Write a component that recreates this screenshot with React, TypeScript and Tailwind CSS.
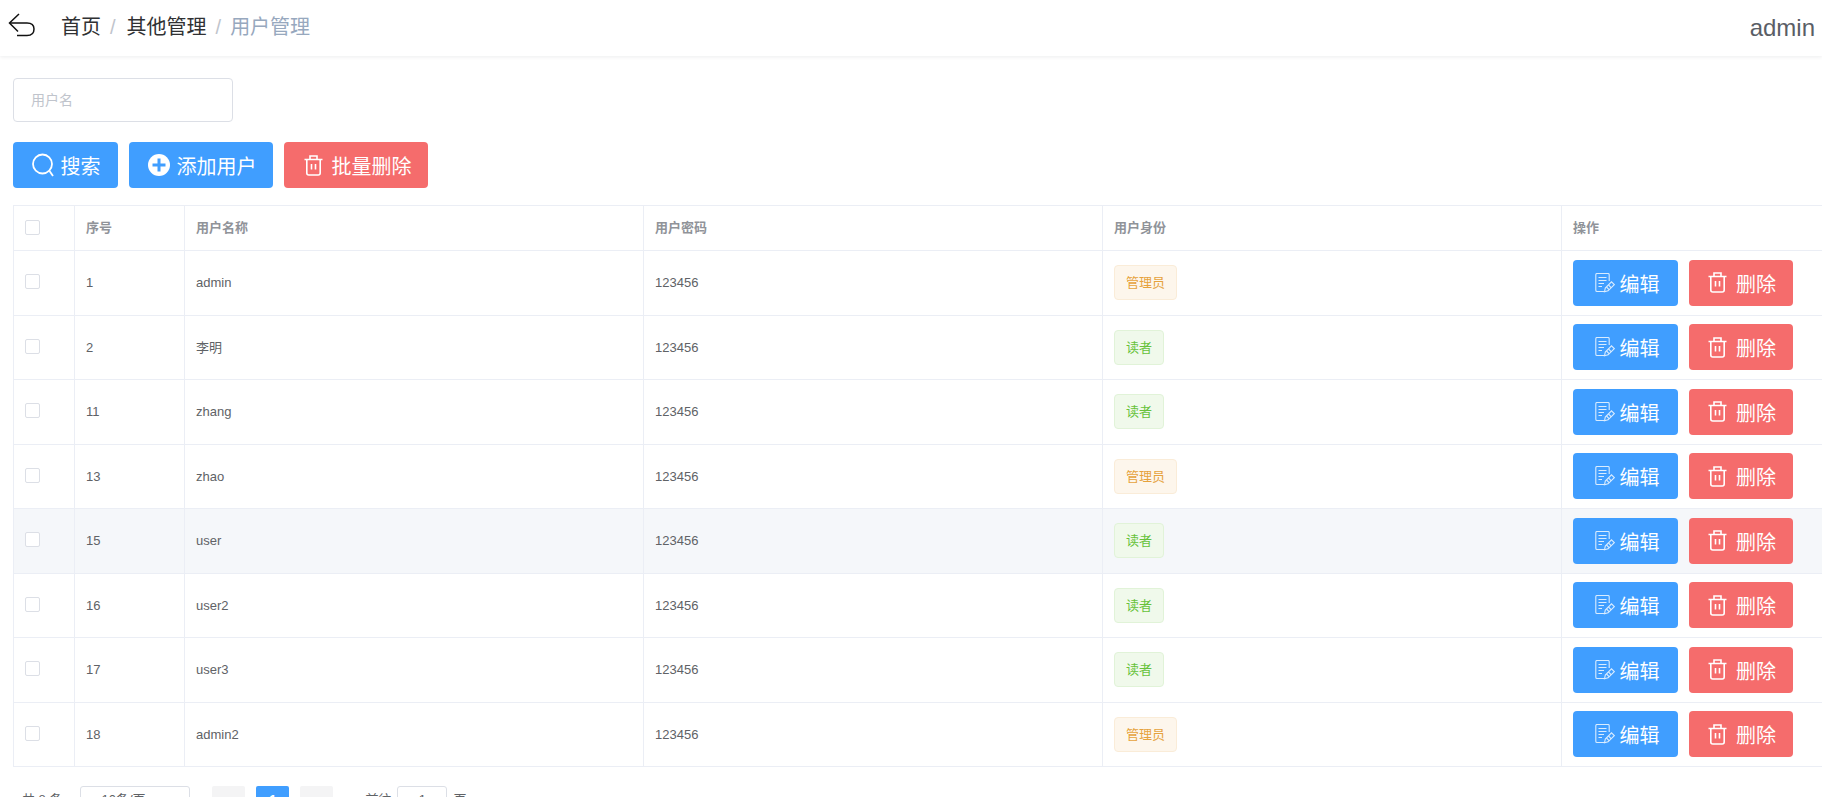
const FONT = "font-['Liberation_Sans','Noto_Sans_CJK_SC',sans-serif]";

const users = [
  { id: 1, name: 'admin', role: '管理员' },
  { id: 2, name: '李明', role: '读者' },
  { id: 11, name: 'zhang', role: '读者' },
  { id: 13, name: 'zhao', role: '管理员' },
  { id: 15, name: 'user', role: '读者' },
  { id: 16, name: 'user2', role: '读者' },
  { id: 17, name: 'user3', role: '读者' },
  { id: 18, name: 'admin2', role: '管理员' },
];

function BackIcon() {
  return (
    <svg width="28" height="24" viewBox="0 0 28 24" fill="none" stroke="#111" strokeWidth="1.5" className="shrink-0 -translate-y-[3px]">
      <path d="M11 1 L1.5 10 L10 18.5" />
      <path d="M2 10 H19 C23.5 10 26 12.5 26 16 C26 20 23.5 22.5 19 22.5 H9" />
    </svg>
  );
}

function SearchIcon() {
  return (
    <svg width="24" height="24" viewBox="0 0 24 24" fill="none" stroke="#fff" strokeWidth="1.8">
      <circle cx="11.5" cy="11" r="9.5" />
      <path d="M18.5 18 L22 23" />
    </svg>
  );
}

function PlusIcon() {
  return (
    <svg width="22" height="22" viewBox="0 0 22 22">
      <circle cx="11" cy="11" r="11" fill="#fff" />
      <path d="M11 4.5 V17.5 M4.5 11 H17.5" stroke="#409eff" strokeWidth="3" />
    </svg>
  );
}

function TrashIcon() {
  return (
    <svg width="19" height="21" viewBox="0 0 19 21" fill="none" stroke="#fff" strokeWidth="1.6">
      <path d="M0.5 4.5 H18.5 M6 4.5 V1 H13 V4.5" />
      <path d="M2.8 4.5 V18 C2.8 19.3 3.6 20 4.8 20 H14.2 C15.4 20 16.2 19.3 16.2 18 V4.5" />
      <path d="M7.5 9 V14.5 M11.5 9 V14.5" />
    </svg>
  );
}

function EditIcon() {
  return (
    <svg width="20" height="20" viewBox="0 0 20 20" fill="none" stroke="#d9ecff" strokeWidth="1.1">
      <path d="M9 18.5 H2 C1.2 18.5 0.8 18 0.8 17.2 V1.8 C0.8 1 1.2 0.5 2 0.5 H13 C13.8 0.5 14.2 1 14.2 1.8 V8" />
      <path d="M3.5 4.5 H11.5 M3.5 7.5 H11.5 M3.5 10.5 H9 M3.5 13.5 H7" />
      <path d="M9.5 18.8 L10.3 15 L16.5 8.8 L19.3 11.6 L13.1 17.8 Z" />
      <path d="M11.5 14 L14.3 16.8 M13.5 12 L16.3 14.8" />
    </svg>
  );
}

function ActionButton({ color, icon, label, width, gap }: { color: string; icon: React.ReactNode; label: string; width: string; gap: string }) {
  return (
    <button className={`flex h-[46px] items-center justify-center rounded-[4px] text-[20px] text-white ${color} ${width} ${gap}`}>
      {icon}
      <span className="translate-y-[2px]">{label}</span>
    </button>
  );
}

function Tag({ role }: { role: string }) {
  const admin = role === '管理员';
  return (
    <span
      className={`inline-flex h-[35px] items-center rounded-[4px] border px-[11px] text-[13px] ${
        admin ? 'border-[#faecd8] bg-[#fdf6ec] text-[#e6a23c]' : 'border-[#e1f3d8] bg-[#f0f9eb] text-[#67c23a]'
      }`}
    >
      {role}
    </span>
  );
}

function Checkbox() {
  return <span className="block size-[15px] -translate-y-[1px] rounded-[2px] border border-[#dcdfe6] bg-white" />;
}

export default function App() {
  return (
    <div className={`h-[797px] w-[1822px] overflow-hidden bg-white ${FONT}`}>
      <header className="flex h-14 items-center justify-between pr-[7px] pl-[8px] shadow-[0_1px_4px_rgba(0,21,41,0.08)]">
        <div className="flex items-center">
          <BackIcon />
          <nav className="ml-[25px] flex -translate-y-[1px] items-center text-[20px] text-[#303133]">
            <span>首页</span>
            <span className="mx-[10px] -translate-x-[1px] text-[#c0c4cc]">/</span>
            <span>其他管理</span>
            <span className="mr-[9px] ml-[9px] text-[#c0c4cc]">/</span>
            <span className="text-[#97a8be]">用户管理</span>
          </nav>
        </div>
        <span className="text-[24px] text-[#5a5e66]">admin</span>
      </header>

      <div className="pt-[22px] pl-[13px]">
        <input
          placeholder="用户名"
          className="block h-[44px] w-[220px] rounded-[4px] border border-[#dcdfe6] px-[17px] text-[14px] placeholder:text-[#c0c4cc]"
        />
        <div className="mt-5 flex gap-[11px]">
          <ActionButton color="bg-[#409eff]" width="w-[105px]" gap="gap-[6px]" icon={<SearchIcon />} label="搜索" />
          <ActionButton color="bg-[#409eff]" width="w-[144px]" gap="gap-[7px] pl-[2px]" icon={<PlusIcon />} label="添加用户" />
          <ActionButton color="bg-[#f56c6c]" width="w-[144px]" gap="gap-[9px] pl-[3px]" icon={<TrashIcon />} label="批量删除" />
        </div>

        <table className="mt-[17px] w-[2007px] table-fixed border-collapse text-[13px] text-[#606266]">
          <colgroup>
            <col className="w-[61px]" />
            <col className="w-[110px]" />
            <col className="w-[459px]" />
            <col className="w-[459px]" />
            <col className="w-[459px]" />
            <col className="w-[459px]" />
          </colgroup>
          <thead>
            <tr className="h-[45px] text-left font-bold text-[#909399]">
              <th className="border border-[#ebeef5] pl-[11px]">
                <Checkbox />
              </th>
              {['序号', '用户名称', '用户密码', '用户身份', '操作'].map((title) => (
                <th key={title} className="border border-[#ebeef5] pl-[11px] font-bold">
                  {title}
                </th>
              ))}
            </tr>
          </thead>
          <tbody>
            {users.map((user) => (
              <tr key={user.id} className={`h-[64.5px] ${user.id === 15 ? 'bg-[#f5f7fa]' : ''}`}>
                <td className="border border-[#ebeef5] pl-[11px]">
                  <Checkbox />
                </td>
                <td className="border border-[#ebeef5] pl-[11px]">{user.id}</td>
                <td className="border border-[#ebeef5] pl-[11px]">{user.name}</td>
                <td className="border border-[#ebeef5] pl-[11px]">123456</td>
                <td className="border border-[#ebeef5] pl-[11px]">
                  <Tag role={user.role} />
                </td>
                <td className="border border-[#ebeef5] pl-[11px]">
                  <div className="flex gap-[11px]">
                    <ActionButton color="bg-[#409eff]" width="w-[105px]" gap="gap-[5px] pl-[3px]" icon={<EditIcon />} label="编辑" />
                    <ActionButton color="bg-[#f56c6c]" width="w-[104px]" gap="gap-[9px] pl-[2px]" icon={<TrashIcon />} label="删除" />
                  </div>
                </td>
              </tr>
            ))}
          </tbody>
        </table>

        <div className="mt-[19px] flex h-7 items-center text-[13px] text-[#606266]">
          <span className="ml-[9px]">共 8 条</span>
          <span className="ml-[18px] flex h-full w-[110px] items-center rounded-[3px] border border-[#dcdfe6] pl-[20px]">10条/页</span>
          <span className="ml-[22px] flex h-full w-[33px] items-center justify-center rounded-[2px] bg-[#f4f4f5] text-[#c0c4cc]">‹</span>
          <span className="ml-[11px] flex h-full w-[33px] items-center justify-center rounded-[2px] bg-[#409eff] font-bold text-white">1</span>
          <span className="ml-[11px] flex h-full w-[33px] items-center justify-center rounded-[2px] bg-[#f4f4f5] text-[#c0c4cc]">›</span>
          <span className="ml-[32px]">前往</span>
          <span className="ml-[6px] flex h-full w-[50px] items-center justify-center rounded-[3px] border border-[#dcdfe6]">1</span>
          <span className="ml-[6px]">页</span>
        </div>
      </div>
    </div>
  );
}
